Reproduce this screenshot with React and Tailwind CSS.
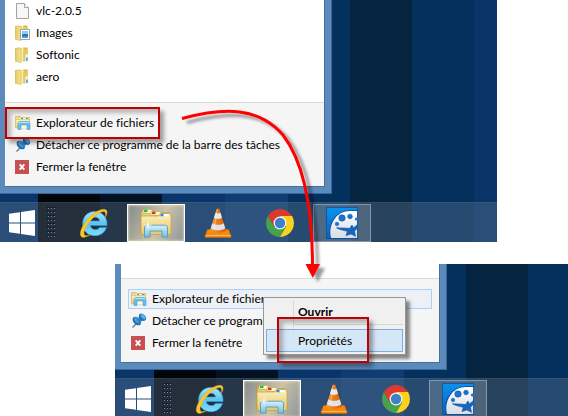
import React from "react";

function FileIcon() {
  return (
    <svg className="h-4 w-4 shrink-0" viewBox="0 0 16 16">
      <path d="M1.5.5h8l4 4v11h-12z" fill="#f7f7f7" stroke="#a3a3a3" />
      <path d="M9.5.5v4h4" fill="#fff" stroke="#a3a3a3" />
    </svg>
  );
}

function FolderShape() {
  return (
    <>
      <path d="M5 1.5 9 .5h3.5v13l-6 1z" fill="#d9b84c" />
      <path d="M0 1.5 4 .8l2 .9v14L0 14z" fill="url(#folderFront)" stroke="#d3b654" strokeWidth=".6" />
      <path d="M6.5 1.2 8.5.8v14l-2 .7z" fill="#fbefae" />
      <path d="M8.5 2h4.2v11.8l-4.2 1z" fill="#e6c960" />
    </>
  );
}

function FolderIcon() {
  return (
    <svg className="h-4 w-4 shrink-0" viewBox="0 0 16 16">
      <FolderShape />
      <path d="M10.5 7.5h2.2v6.3l-2.2.6z" fill="#f6fbff" />
      <path d="M11.2 10.5h1.6v3.3l-1.6.4z" fill="#35a2e8" />
    </svg>
  );
}

function PicturesIcon() {
  return (
    <svg className="h-4 w-4 shrink-0" viewBox="0 0 16 16">
      <FolderShape />
      <path d="M5.5 4.5h9v10h-9z" fill="#fff" stroke="#9aa3ab" />
      <path d="M7 6h6v7H7z" fill="#86cdf0" />
      <path d="M7 10c2-2 4 0 6-1v4H7z" fill="#2a6f96" />
      <path d="M7 11.5c2-.8 4 .3 6-.3V13H7z" fill="#4aa9d8" />
    </svg>
  );
}

function ExplorerIcon({ className }) {
  return (
    <svg className={className} viewBox="0 0 32 32">
      <path d="M1 4h10l1 2h17v20H1z" fill="#e9cf78" stroke="#b9973c" />
      <path d="M3 2.5h9v4H3z" fill="#fff6cf" stroke="#c7ab56" strokeWidth=".7" />
      <path d="M4 2.8h3.5v2.4H4z" fill="#17c43c" />
      <path d="M11 4.5h10v4H11z" fill="#fff6cf" stroke="#c7ab56" strokeWidth=".7" />
      <path d="M12 4.8h3.5v2.4H12z" fill="#d3391f" />
      <path d="M1 9h18l1-2.5h10L31 9v18.5H1z" fill="url(#explorerBody)" stroke="#c2a352" strokeWidth=".8" />
      <path d="M20.5 7h3.5v2.2h-3.5z" fill="#1c8de0" />
      <path d="M23.5 7h5v2.2h-5z" fill="#fff" />
      <path
        d="M4.5 30v-9c0-1.8 1-2.8 2.8-2.8h17.4c1.8 0 2.8 1 2.8 2.8v9h-5.5v-6H10v6z"
        fill="url(#explorerStand)"
        stroke="#4f9cc4"
        strokeWidth=".9"
      />
      <path d="M8 13l.7 4.2 4.3.8-4.3.8L8 23l-.7-4.2L3 18l4.3-.8z" fill="#fff" opacity=".85" />
    </svg>
  );
}

function SmallExplorerIcon() {
  return (
    <svg className="h-4 w-4 shrink-0" viewBox="0 0 16 16">
      <path d="M.5 1.5h5l1 1h8v10H.5z" fill="#efd98c" stroke="#cfb566" strokeWidth=".7" />
      <path d="M5 3h8v1H5z" fill="#fff" />
      <path d="M6 3h2v1H6z" fill="#35b45a" />
      <path d="M11 3h2v1h-2z" fill="#4a9be0" />
      <path d="M.5 4.5h14v8.500H.5z" fill="url(#explorerBody)" stroke="#d6bc6c" strokeWidth=".6" />
      <path
        d="M3 14.500V9c0-1.500.8-2.500 2.500-2.500h7c1.700 0 2.500 1 2.500 2.500v5.500h-3V10H6v4.500z"
        fill="#62bdec"
        stroke="#4aa2d4"
        strokeWidth=".6"
      />
      <path d="M4 8.500C4 7.500 5 7.500 5.500 7.500h7c1 0 1.500.3 1.500 1.200" stroke="#d3f2fd" strokeWidth=".8" fill="none" />
      <path d="M6.500 10.500h5V13h-5z" fill="#fdf8e2" />
    </svg>
  );
}

function PinIcon() {
  return (
    <svg className="h-4 w-4 shrink-0" viewBox="0 0 16 16">
      <path d="M1.5 14.500 5.500 10.500" stroke="#667888" strokeWidth="1.200" />
      <ellipse cx="5.800" cy="8" rx="3.400" ry="5" transform="rotate(-42 5.800 8)" fill="#1d6cb2" />
      <ellipse cx="6.400" cy="7.200" rx="2.400" ry="3.800" transform="rotate(-42 6.400 7.200)" fill="#4a9ede" />
      <path d="M5.500 6.500 9.500 3l3 3.200-4 4z" fill="#2e83ca" />
      <ellipse cx="11.500" cy="4.200" rx="2.800" ry="4.200" transform="rotate(-42 11.500 4.200)" fill="#1d6cb2" />
      <ellipse cx="12.100" cy="3.600" rx="1.800" ry="3.100" transform="rotate(-42 12.100 3.600)" fill="#5facea" />
    </svg>
  );
}

function CloseIcon() {
  return (
    <svg className="h-4 w-4 shrink-0" viewBox="0 0 16 16">
      <path d="M0 1h14v14H0z" fill="#c75050" />
      <path d="m4.700 5.300 4.600 5.400m0-5.400-4.600 5.400" stroke="#fff" strokeWidth="1.800" />
    </svg>
  );
}

function WindowsLogo() {
  return (
    <svg className="h-[26px] w-[26px]" viewBox="0 0 26 26" fill="#fff">
      <path d="M0 3.700 11 2.200v10.200H0zM12 2 26 0v12.400H12zM0 13.400h11v10.300L0 22.200zM12 13.400h14V26l-14-2z" />
    </svg>
  );
}

function GripDots() {
  return (
    <svg className="h-[31px] w-[9px]" viewBox="0 0 9 31">
      {[0, 4, 8, 12, 16, 20, 24, 28].map((y) =>
        [0, 3, 6].map((x) => (
          <g key={`${x}-${y}`}>
            <rect x={x + 1} y={y + 1} width="1" height="1" fill="#71869e" />
            <rect x={x} y={y} width="2" height="1" fill="#0b1a2b" />
          </g>
        ))
      )}
    </svg>
  );
}

function InternetExplorerIcon() {
  return (
    <svg className="h-8 w-8" viewBox="0 0 32 32">
      <path
        fillRule="evenodd"
        d="M16.500 4.500C23.500 4.500 29 10 29 16.600v2H12.300c.5 2.600 2.300 4 4.900 4 2 0 3.400-.7 4.200-2.200h7.100c-1.600 5-6 8.300-11.700 8.300C9.600 28.700 4.600 23.500 4.600 16.700 4.600 9.800 9.700 4.500 16.500 4.500zM12.300 14h9.300c-.4-2.400-2.100-3.800-4.600-3.800s-4.200 1.400-4.700 3.800z"
        fill="url(#ieBody)"
        stroke="#2d9bd6"
        strokeWidth=".6"
      />
      <path
        d="M27.500 10.500C29.700 6 29.600 3.200 27.200 2.500 22.500 1.200 13 7 7.200 15.200 2 22.500.8 29 4.300 30.200c2 .7 5-.5 8-2.600-3 1.300-5 1.400-5.800.3C4.900 25.700 7.500 19.500 12.500 13.700 18 7.200 24.200 3.400 26.500 4.700c1.200.7 1.400 2.700 1 5.800z"
        fill="#f9c62c"
        stroke="#e0a21c"
        strokeWidth=".4"
      />
    </svg>
  );
}

function VlcIcon() {
  return (
    <svg className="h-8 w-8" viewBox="0 0 32 32">
      <path d="M5.500 22.500h21l2.500 6.500v1.500H3V29z" fill="#f58a12" stroke="#c96508" strokeWidth=".6" />
      <path d="M4 28.500h24.500" stroke="#ffc15c" strokeWidth=".8" />
      <path d="M14.600 2.200c.3-1 2.500-1 2.800 0L24 23.500c-2 3.300-14 3.300-16 0z" fill="url(#vlcCone)" />
      <path d="m13.500 5.800-1.500 5c2 1.500 6 1.500 8 0l-1.500-5c-1.300.8-3.700.8-5 0z" fill="#e6e9ec" />
      <path d="m10.300 16.200-1.500 5c3 2.700 11.400 2.700 14.400 0l-1.500-5c-3 2-8.400 2-11.400 0z" fill="#dfe3e7" />
      <path d="M15 2.500 12 22" stroke="#fff" opacity=".3" strokeWidth="1.500" />
    </svg>
  );
}

function ChromeIcon() {
  return (
    <svg className="h-7 w-7" viewBox="0 0 28 28">
      <path d="M1.900 7A14 14 0 0 0 14 28l6.100-10.500L14 14 8 17.500z" fill="#46a34c" />
      <path d="M14 7h12.100A14 14 0 0 1 14 28l6.100-10.500z" fill="#fcd21c" />
      <path d="M14 7h12.100A14 14 0 0 0 1.900 7L8 17.500 14 14z" fill="#dc3a2e" />
      <circle cx="14" cy="14" r="6.500" fill="#f3f6fa" />
      <circle cx="14" cy="14" r="5.200" fill="#3f7fc6" />
    </svg>
  );
}

function PaletteIcon() {
  return (
    <svg className="h-8 w-8" viewBox="0 0 32 32">
      <path d="M.5.5h31v31H.5z" fill="url(#paletteSky)" />
      <path d="M4.500 31.500C1 17 10 3.500 24 3.500h8v28z" fill="url(#paletteFace)" stroke="#0c57ae" strokeWidth="1.200" />
      <path d="M.5.5h31v31H.5z" fill="none" stroke="#0b4f9c" strokeWidth=".8" />
      <circle cx="16" cy="11" r="3.200" fill="#1b72cf" stroke="#0d55a8" strokeWidth=".6" />
      <circle cx="24" cy="9.500" r="2.300" fill="#1b72cf" stroke="#0d55a8" strokeWidth=".6" />
      <circle cx="30.500" cy="12" r="1.600" fill="#1b72cf" />
      <circle cx="11" cy="17" r="1.800" fill="#1b72cf" stroke="#0d55a8" strokeWidth=".5" />
      <path
        d="m10.500 20.800 10.500.4 2.500.3L26 18l1.500 3 4.500-4v3.500l-3.500 3.800 1 5L25 27l-5 1.500 1.300-4.200c-4-.8-8-1.800-10.800-3.500z"
        fill="#1766bd"
        stroke="#0d4f9c"
        strokeWidth=".6"
      />
    </svg>
  );
}

function SharedGradients() {
  return (
    <svg className="absolute h-0 w-0" aria-hidden="true">
      <defs>
        <linearGradient id="folderFront"><stop stopColor="#e2c863" /><stop offset="1" stopColor="#f8e594" /></linearGradient>
        <linearGradient id="explorerBody" x2="0" y2="1"><stop stopColor="#fff2bd" /><stop offset="1" stopColor="#e4c66c" /></linearGradient>
        <linearGradient id="explorerStand" x2="0" y2="1"><stop stopColor="#d5f2fc" /><stop offset="1" stopColor="#74bfe2" /></linearGradient>
        <linearGradient id="ieBody" x2="0" y2="1"><stop stopColor="#a5e6fb" /><stop offset=".5" stopColor="#5cc4f2" /><stop offset="1" stopColor="#7fdcff" /></linearGradient>
        <linearGradient id="vlcCone"><stop stopColor="#f99a2b" /><stop offset="1" stopColor="#d95f04" /></linearGradient>
        <linearGradient id="paletteSky" x2="0" y2="1"><stop stopColor="#0a93ec" /><stop offset="1" stopColor="#0e5fb8" /></linearGradient>
        <linearGradient id="paletteFace" x2="0" y2="1"><stop stopColor="#fff" /><stop offset="1" stopColor="#d5dde4" /></linearGradient>
      </defs>
    </svg>
  );
}

function MenuRow({ icon, label, hot = false }) {
  return (
    <li className="h-[22px] px-[7px] py-px">
      <button
        type="button"
        className={
          "flex h-5 w-full items-center gap-[5px] whitespace-nowrap border px-0.5 text-left " +
          (hot ? "border-[#a8d2fd] bg-[#edf1f6]" : "border-transparent")
        }
      >
        {icon}
        <span>{label}</span>
      </button>
    </li>
  );
}

function JumpList({ frame, hot = false, children }) {
  return (
    <div className={"w-[332px] border-b border-r border-[#3c679b] bg-[#5b8abb] pb-1.5 pr-1.5 " + frame}>
      <div className="border-b border-r border-[#44709f] bg-[#f5f5f5]">
        {children}
        <ul className="border-t border-[#d9d9d9] pb-2 pt-[9px]">
          <MenuRow icon={<SmallExplorerIcon />} label="Explorateur de fichiers" hot={hot} />
          <MenuRow icon={<PinIcon />} label="Détacher ce programme de la barre des tâches" />
          <MenuRow icon={<CloseIcon />} label="Fermer la fenêtre" />
        </ul>
      </div>
    </div>
  );
}

const plain = "border-transparent";
const apps = [
  { name: "Internet Explorer", icon: <InternetExplorerIcon />, look: plain },
  {
    name: "Explorateur de fichiers",
    icon: <ExplorerIcon className="h-8 w-8" />,
    look: "border-[#fdfbf2] bg-[linear-gradient(115deg,#858b8c,#c9c3a8_55%,#8e959c)] shadow-[inset_0_0_3px_#f5ecd0]",
  },
  { name: "VLC", icon: <VlcIcon />, look: plain },
  { name: "Chrome", icon: <ChromeIcon />, look: plain },
  { name: "Palette", icon: <PaletteIcon />, look: "border-[#8596a9] bg-[#8298ac]/40" },
];

function Taskbar({ start }) {
  return (
    <nav className={"mt-2 flex h-10 items-center border-t border-white/5 bg-[#6a7d96]/35 " + start}>
      <button type="button" aria-label="Démarrer" className="flex w-[26px] justify-center">
        <WindowsLogo />
      </button>
      <div className="ml-3 mr-[9px]">
        <GripDots />
      </div>
      <div className="flex gap-1">
        {apps.map((app) => (
          <button
            key={app.name}
            type="button"
            aria-label={app.name}
            className={"flex h-[38px] w-[58px] items-center justify-center border " + app.look}
          >
            {app.icon}
          </button>
        ))}
      </div>
    </nav>
  );
}

const wallpaper =
  "bg-[linear-gradient(90deg,#0a3569_38px,#01060c_38px_100px,#021222_100px_162px,#0a356b_162px_225px,#103c74_225px_288px,#04305d_288px_350px,#052440_350px_412px,#04305d_412px_474px,#0a3569_474px)]";

function Highlight({ className }) {
  return (
    <div
      className={
        "pointer-events-none absolute border-2 border-[#c00000] shadow-[4px_4px_4px_rgba(0,0,0,0.35),inset_4px_4px_4px_rgba(0,0,0,0.25)] " +
        className
      }
    />
  );
}

export default function App() {
  return (
    <main className="relative h-screen overflow-hidden bg-white font-['Lato','Open_Sans',sans-serif] text-[12px] leading-4 text-black [font-variant-ligatures:none]">
      <SharedGradients />

      <section className={"relative mr-[71px] " + wallpaper}>
        <JumpList frame="pl-[5px]">
          <ul className="bg-white pb-3.5">
            <MenuRow icon={<FileIcon />} label="vlc-2.0.5" />
            <MenuRow icon={<PicturesIcon />} label="Images" />
            <MenuRow icon={<FolderIcon />} label="Softonic" />
            <MenuRow icon={<FolderIcon />} label="aero" />
          </ul>
        </JumpList>
        <Taskbar start="pl-[9px]" />
        <Highlight className="left-[5px] top-[107px] h-8 w-[155px]" />
      </section>

      <section className={"relative ml-[115px] mt-[22px] bg-[position:1px_0] " + wallpaper}>
        <JumpList frame="pl-1.5" hot>
          <div className="h-3.5 bg-white" />
        </JumpList>
        <Taskbar start="pl-2.5" />

        <div className="absolute left-[148px] top-[33px] w-[143px] border border-[#979797] bg-[#f0f0f0] p-0.5 shadow-[4px_4px_3px_rgba(0,0,0,0.45)]">
          <div className="flex flex-col bg-[linear-gradient(90deg,transparent_27px,#d9d9d9_27px_28px,transparent_28px)]">
            <button type="button" className="h-6 pl-8 text-left font-bold">Ouvrir</button>
            <div className="mb-1 ml-7 border-t border-[#d7d7d7]" />
            <button type="button" className="h-[23px] border border-[#78aee5] bg-[#d1e4f6]/90 pl-[31px] text-left">
              Propriétés
            </button>
          </div>
        </div>
        <Highlight className="left-[162px] top-[53px] h-[46px] w-[92px]" />
      </section>

      <svg className="pointer-events-none absolute left-0 top-0" width="568" height="416" viewBox="0 0 568 416">
        <defs>
          <filter id="arrowShadow" x="-20%" y="-20%" width="140%" height="140%">
            <feDropShadow dx="5" dy="4" stdDeviation="1.5" floodOpacity=".4" />
          </filter>
        </defs>
        <g filter="url(#arrowShadow)">
          <path d="M182 118.5C225 107 259 107 283 135 306 165 312.500 215 312.500 266" fill="none" stroke="#f00" strokeWidth="3" />
          <path d="M305.500 264h14.500l-7.200 14z" fill="#f00" />
        </g>
      </svg>
    </main>
  );
}
